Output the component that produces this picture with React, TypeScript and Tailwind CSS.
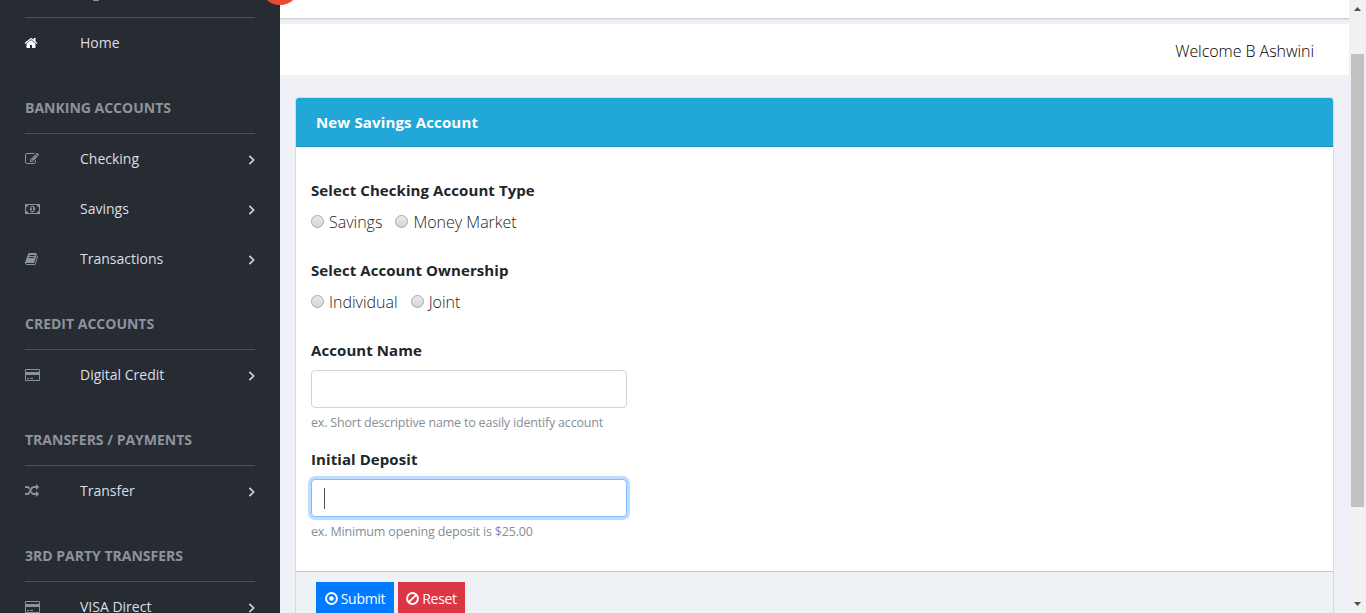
import React from "react";

type IconName = "home" | "edit" | "money" | "book" | "card" | "random";

const icons: Record<IconName, { w: number; d: string }> = {
  home: {
    w: 1792,
    d: "M1472 992v480q0 26-19 45t-45 19h-384v-384h-256v384h-384q-26 0-45-19t-19-45v-480q0-1 .5-3t.5-3l575-474 575 474q1 2 1 6zm223-69l-62 74q-8 9-21 11h-3q-13 0-21-7l-692-577-692 577q-12 8-24 7-13-2-21-11l-62-74q-8-10-7-23.5t11-21.5l719-599q32-26 76-26t76 26l244 204v-195q0-14 9-23t23-9h192q14 0 23 9t9 23v408l219 182q10 8 11 21.5t-7 23.5z",
  },
  edit: {
    w: 1792,
    d: "M888 1184l116-116-152-152-116 116v56h96v96h56zm440-720q-16-16-33 1l-350 350q-17 17-1 33t33-1l350-350q17-17 1-33zm80 594v190q0 119-84.5 203.5t-203.5 84.5h-832q-119 0-203.5-84.5t-84.5-203.5v-832q0-119 84.5-203.5t203.5-84.5h832q63 0 117 25 15 7 18 23 3 17-9 29l-49 49q-14 14-32 8-23-6-45-6h-832q-66 0-113 47t-47 113v832q0 66 47 113t113 47h832q66 0 113-47t47-113v-126q0-13 9-22l64-64q15-15 35-7t20 29zm-96-738l288 288-672 672h-288v-288zm444 132l-92 92-288-288 92-92q28-28 68-28t68 28l152 152q28 28 28 68t-28 68z",
  },
  money: {
    w: 1920,
    d: "M768 1152h384v-96h-128v-448h-114l-148 137 77 80q42-37 55-57h2v288h-128v96zm512-256q0 70-21 142t-59.5 134-101.5 101-138 39-138-39-101.5-101-59.5-134-21-142 21-142 59.5-134 101.5-101 138-39 138 39 101.5 101 59.5 134 21 142zm512 256v-512q-106 0-181-75t-75-181h-1152q0 106-75 181t-181 75v512q106 0 181 75t75 181h1152q0-106 75-181t181-75zm128-832v1152q0 26-19 45t-45 19h-1792q-26 0-45-19t-19-45v-1152q0-26 19-45t45-19h1792q26 0 45 19t19 45z",
  },
  book: {
    w: 1792,
    d: "M1639 478q40 57 18 129l-275 906q-19 64-76.5 107.5t-122.5 43.5h-923q-77 0-148.5-53.5t-99.5-131.5q-24-67-2-127 0-4 3-27t4-37q1-8-3-21.5t-3-19.5q2-11 8-21t16.5-23.5 16.5-23.5q23-38 45-91.5t30-91.5q3-10 .5-30t-.5-28q3-11 17-28t17-23q21-36 42-92t25-90q1-9-2.5-32t.5-28q4-13 22-30.5t22-22.5q19-26 42.5-84.5t27.5-96.5q1-8-3-25.5t-2-26.5q2-8 9-18t18-23 17-21q8-12 16.5-30.5t15-35 16-36 19.5-32 26.5-23.5 36-11.5 47.5 5.5l-1 3q38-9 51-9h761q74 0 114 56t18 130l-274 906q-36 119-71.5 153.5t-128.5 34.5h-869q-27 0-38 15-11 16-1 43 24 70 144 70h923q29 0 56-15.5t35-41.5l300-987q7-22 5-57 38 15 59 43zm-1064 2q-4 13 2 22.5t20 9.5h608q13 0 25.5-9.5t16.5-22.5l21-64q4-13-2-22.5t-20-9.5h-608q-13 0-25.5 9.5t-16.5 22.5zm-83 256q-4 13 2 22.5t20 9.5h608q13 0 25.5-9.5t16.5-22.5l21-64q4-13-2-22.5t-20-9.5h-608q-13 0-25.5 9.5t-16.5 22.5z",
  },
  card: {
    w: 1920,
    d: "M1760 128q66 0 113 47t47 113v1216q0 66-47 113t-113 47h-1600q-66 0-113-47t-47-113v-1216q0-66 47-113t113-47h1600zm-1600 128q-13 0-22.5 9.5t-9.5 22.5v224h1664v-224q0-13-9.5-22.5t-22.5-9.5h-1600zm1600 1280q13 0 22.5-9.5t9.5-22.5v-608h-1664v608q0 13 9.5 22.5t22.5 9.5h1600zm-1504-128v-128h256v128h-256zm384 0v-128h384v128h-384z",
  },
  random: {
    w: 1792,
    d: "M666 481q-60 92-137 273-22-45-37-72.5t-40.5-63.5-51-56.5-63-35-81.5-14.5h-224q-14 0-23-9t-9-23v-192q0-14 9-23t23-9h224q250 0 410 225zm1126 799q0 14-9 23l-320 320q-9 9-23 9-13 0-22.5-9.5t-9.5-22.5v-192q-32 0-85 .5t-81 1-73-1-71-5-64-10.5-63-18.5-58-28.5-59-40-55-53.5-56-69.5q59-93 136-273 22 45 37 72.5t40.5 63.5 51 56.5 63 35 81.5 14.5h256v-192q0-14 9-23t23-9q12 0 24 10l319 319q9 9 9 23zm0-896q0 14-9 23l-320 320q-9 9-23 9-13 0-22.5-9.5t-9.5-22.5v-192h-256q-48 0-87 15t-69 45-51 61.5-45 77.5q-32 62-78 171-29 66-49.5 111t-54 105-64 100-74 83-90 68.5-106.5 42-128 16.5h-224q-14 0-23-9t-9-23v-192q0-14 9-23t23-9h224q48 0 87-15t69-45 51-61.5 45-77.5q32-62 78-171 29-66 49.5-111t54-105 64-100 74-83 90-68.5 106.5-42 128-16.5h256v-192q0-14 9-23t23-9q12 0 24 10l319 319q9 9 9 23z",
  },
};

function Icon({ name, className }: { name: IconName; className: string }) {
  const { w, d } = icons[name];
  return (
    <svg width={(w / 1792) * 14} height="14" viewBox={`0 0 ${w} 1792`} fill="currentColor" className={className}>
      <path d={d} />
    </svg>
  );
}

function NavItem({ icon, label, active }: { icon: IconName; label: string; active?: boolean }) {
  return (
    <a className="flex h-[50px] shrink-0 items-center">
      <span className="w-[55px] shrink-0">
        <Icon name={icon} className={active ? "-ml-px text-white" : "text-[#8b939b]"} />
      </span>
      <span className="flex-1 text-[14px] leading-5 text-[#dcdfe3]">{label}</span>
      {!active && (
        <svg width="7" height="12" viewBox="0 0 7 12" fill="none" stroke="#d0d3d6" strokeWidth="1.7" className="mt-0.5">
          <path d="M1.4 1.8 5.6 6 1.4 10.2" />
        </svg>
      )}
    </a>
  );
}

function NavHeading({ children }: { children: React.ReactNode }) {
  return (
    <h3 className="mt-[15px] flex h-[51px] shrink-0 items-center border-b border-[#4e5052] pb-0.5 text-[14px] font-bold text-[#8f929d]">
      {children}
    </h3>
  );
}

function Radio({ label }: { label: string }) {
  return (
    <label className="flex items-center">
      <span className="mb-0.5 mr-[5px] size-[13px] shrink-0 rounded-full border border-[#a8a8a8] bg-linear-to-b from-[#e9e9e9] to-[#d6d6d6]" />
      <span className="font-light leading-6">{label}</span>
    </label>
  );
}

function FieldTitle({ className, children }: { className?: string; children: React.ReactNode }) {
  return (
    <h2 className={`h-6 text-[15px] font-bold leading-6 tracking-[0.08px] ${className ?? ""}`}>{children}</h2>
  );
}

export default function App() {
  return (
    <div className="flex h-[613px] w-[1366px] overflow-hidden bg-[#f0f1f7] font-['Open_Sans',sans-serif]">
      <aside className="relative flex w-[280px] shrink-0 flex-col bg-[#272c33] px-[25px]">
        <div className="flex h-[18px] shrink-0 items-start border-b border-[#4e5052] pl-[68px]">
          <span className="h-px w-1.5 bg-[#8b9096]" />
        </div>
        <NavItem icon="home" label="Home" active />
        <NavHeading>BANKING ACCOUNTS</NavHeading>
        <NavItem icon="edit" label="Checking" />
        <NavItem icon="money" label="Savings" />
        <NavItem icon="book" label="Transactions" />
        <NavHeading>CREDIT ACCOUNTS</NavHeading>
        <NavItem icon="card" label="Digital Credit" />
        <NavHeading>TRANSFERS / PAYMENTS</NavHeading>
        <NavItem icon="random" label="Transfer" />
        <NavHeading>3RD PARTY TRANSFERS</NavHeading>
        <NavItem icon="card" label="VISA Direct" />
        <span className="absolute -top-[35px] left-[260px] z-10 size-10 rounded-full bg-[#e94b35]" />
      </aside>

      <main className="flex min-w-0 flex-1 flex-col">
        <div className="h-[19px] shrink-0 border-b border-[#cfd0d5] bg-white shadow-[0_1px_1px_rgba(0,0,0,0.05)]" />
        <header className="mt-[5px] flex h-[51px] shrink-0 items-center justify-end bg-white pr-[35px] pt-0.5">
          <span className="text-[16px] font-light tracking-[-0.05px] text-black">Welcome B Ashwini</span>
        </header>

        <section className="mx-[15px] mt-[22px] flex flex-1 flex-col rounded-t border border-b-0 border-[#d9dbe0] bg-white">
          <h1 className="flex h-[49px] shrink-0 items-center rounded-t-[3px] border-b border-[#1c8fbd] bg-[#22a7d9] pl-5 text-[15px] font-bold tracking-[0.15px] text-white">
            New Savings Account
          </h1>
          <form className="flex h-[424px] shrink-0 flex-col px-[15px] pt-[31px] text-[#212529]">
            <FieldTitle>Select Checking Account Type</FieldTitle>
            <div className="mt-2 flex h-6 items-center gap-[13px] text-[16px]">
              <Radio label="Savings" />
              <Radio label="Money Market" />
            </div>
            <FieldTitle className="mt-6">Select Account Ownership</FieldTitle>
            <div className="mt-2 flex h-6 items-center gap-[13px] text-[16px]">
              <Radio label="Individual" />
              <Radio label="Joint" />
            </div>
            <FieldTitle className="mt-6">Account Name</FieldTitle>
            <div className="mt-2 h-[38px] w-[316px] rounded border border-[#ced4da] bg-white" />
            <p className="mt-[5px] h-[19px] text-[12.5px] leading-[19px] tracking-[-0.19px] text-[#868e96]">
              ex. Short descriptive name to easily identify account
            </p>
            <FieldTitle className="mt-[15px]">Initial Deposit</FieldTitle>
            <div className="mt-2 flex h-[38px] w-[316px] items-center rounded border border-[#80bdff] bg-white pl-3 shadow-[0_0_0_3px_rgba(0,123,255,0.25)]">
              <span className="h-[21px] w-px bg-[#495057]" />
            </div>
            <p className="mt-[5px] h-[19px] text-[12.5px] leading-[19px] tracking-[-0.17px] text-[#868e96]">
              ex. Minimum opening deposit is $25.00
            </p>
          </form>
          <footer className="flex flex-1 items-start gap-1 border-t border-[#c2cad0] bg-[#eef2f5] pl-5 pt-2.5">
            <button className="flex h-[31px] w-[78px] shrink-0 items-center justify-center gap-[3px] bg-[#007bff] pt-px text-[14px] tracking-[-0.3px] text-white">
              <svg width="13" height="13" viewBox="0 0 12 12" fill="none">
                <circle cx="6" cy="6" r="5" stroke="currentColor" strokeWidth="1.8" />
                <circle cx="6" cy="6" r="2.1" fill="currentColor" />
              </svg>
              <span>Submit</span>
            </button>
            <button className="flex h-[31px] w-[67px] shrink-0 items-center justify-center gap-[3px] bg-[#dc3545] pt-px text-[14px] tracking-[-0.3px] text-white">
              <svg width="13" height="13" viewBox="0 0 12 12" fill="none" stroke="currentColor" strokeWidth="1.8">
                <circle cx="6" cy="6" r="5" />
                <path d="m2.6 9.4 6.8-6.8" />
              </svg>
              <span>Reset</span>
            </button>
          </footer>
        </section>
      </main>

      <div className="flex w-[17px] shrink-0 flex-col items-center bg-[#f1f1f1]">
        <svg width="7" height="4" viewBox="0 0 7 4" fill="#505050" className="mt-[7px] shrink-0">
          <path d="M3.5 0 7 4H0z" />
        </svg>
        <div className="mt-[43px] h-[453px] w-[13px] shrink-0 bg-[#c1c1c1]" />
        <svg width="7" height="4" viewBox="0 0 7 4" fill="#505050" className="mt-[95px] shrink-0">
          <path d="M0 0h7L3.5 4z" />
        </svg>
      </div>
    </div>
  );
}
